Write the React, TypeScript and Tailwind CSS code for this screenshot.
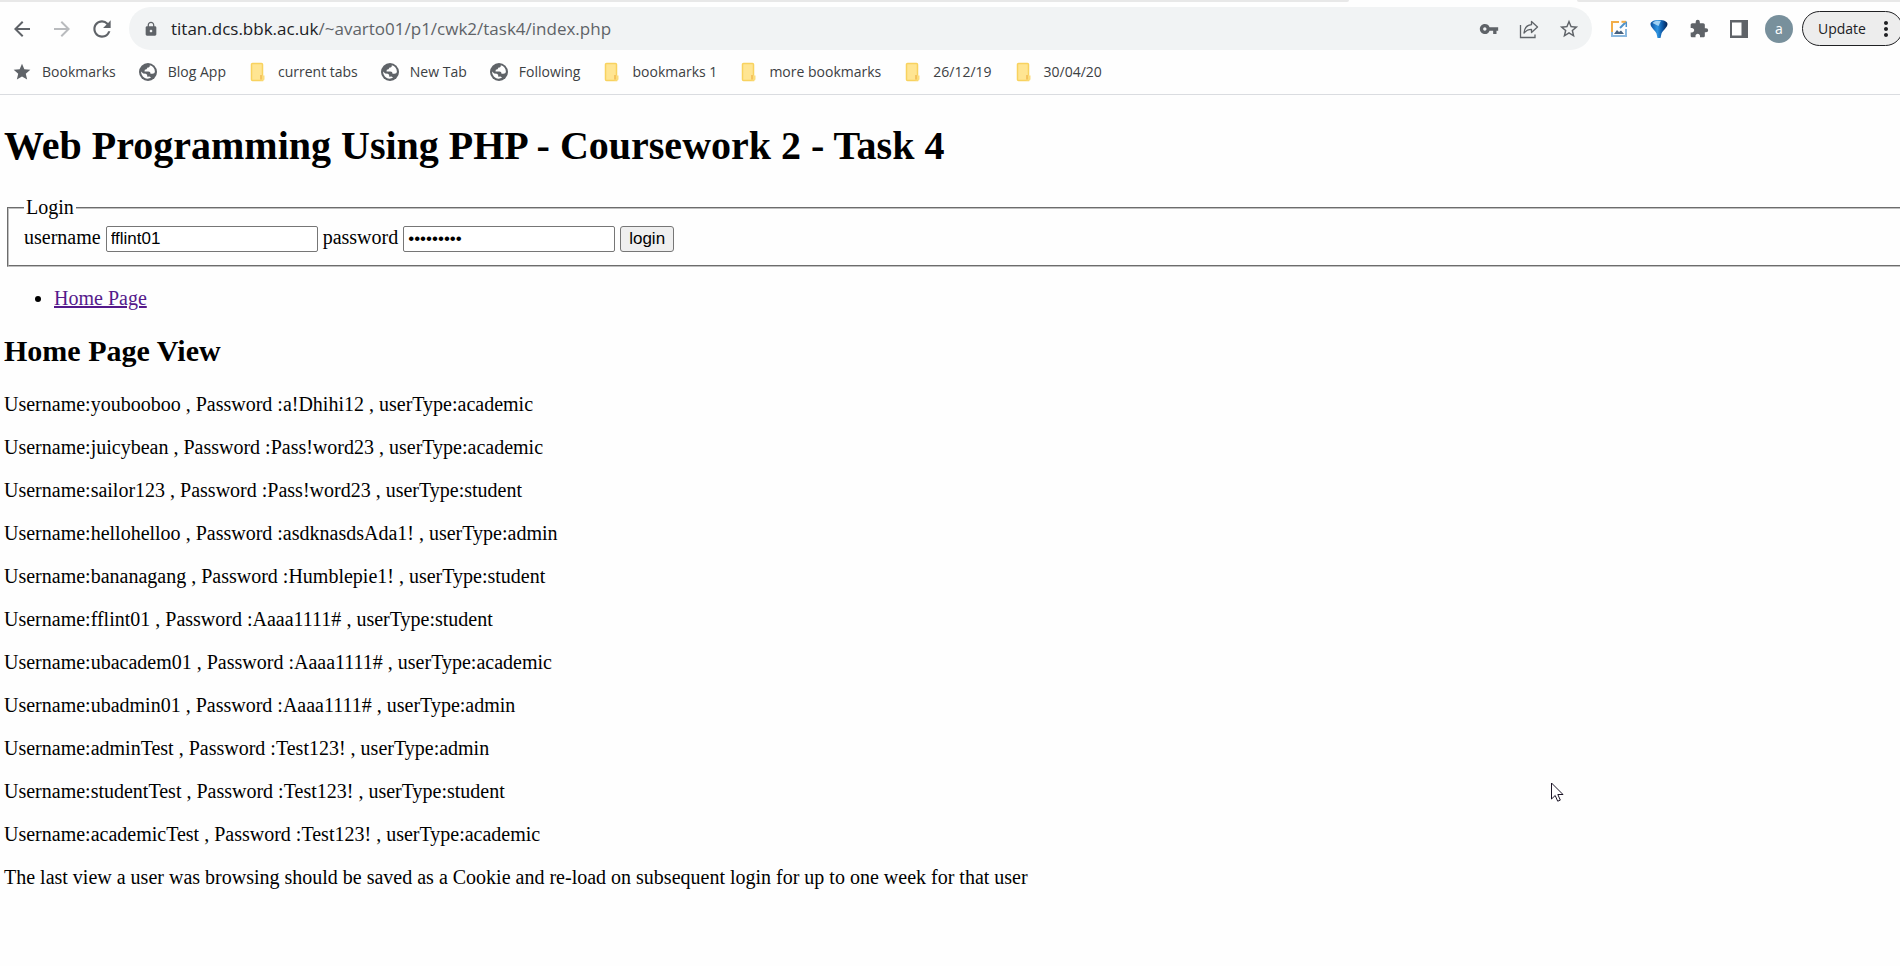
import type { ReactNode } from "react";
import {
  MdArrowBack,
  MdArrowForward,
  MdExtension,
  MdLock,
  MdMoreVert,
  MdRefresh,
  MdStar,
  MdStarBorder,
  MdVpnKey,
} from "react-icons/md";

const users = [
  { name: "youbooboo", password: "a!Dhihi12", type: "academic" },
  { name: "juicybean", password: "Pass!word23", type: "academic" },
  { name: "sailor123", password: "Pass!word23", type: "student" },
  { name: "hellohelloo", password: "asdknasdsAda1!", type: "admin" },
  { name: "bananagang", password: "Humblepie1!", type: "student" },
  { name: "fflint01", password: "Aaaa1111#", type: "student" },
  { name: "ubacadem01", password: "Aaaa1111#", type: "academic" },
  { name: "ubadmin01", password: "Aaaa1111#", type: "admin" },
  { name: "adminTest", password: "Test123!", type: "admin" },
  { name: "studentTest", password: "Test123!", type: "student" },
  { name: "academicTest", password: "Test123!", type: "academic" },
];

type BookmarkKind = "star" | "globe" | "folder";

const bookmarks: { label: string; kind: BookmarkKind }[] = [
  { label: "Bookmarks", kind: "star" },
  { label: "Blog App", kind: "globe" },
  { label: "current tabs", kind: "folder" },
  { label: "New Tab", kind: "globe" },
  { label: "Following", kind: "globe" },
  { label: "bookmarks 1", kind: "folder" },
  { label: "more bookmarks", kind: "folder" },
  { label: "26/12/19", kind: "folder" },
  { label: "30/04/20", kind: "folder" },
];

function FolderIcon() {
  return (
    <svg width="16" height="20" viewBox="0 0 16 20" aria-hidden="true">
      <path d="M1.500 2.500a1 1 0 0 1 1-1h9a1 1 0 0 1 1 1v16h-10a1 1 0 0 1-1-1z" fill="#ffe592" stroke="#f8d25f" strokeWidth="1.500" />
      <path d="M10.500 13.500h4v3.500a1.500 1.500 0 0 1-1.500 1.500h-2.500z" fill="#fbdc7c" />
      <path d="M11 13v4.500" stroke="#eda93c" />
    </svg>
  );
}

function GlobeIcon() {
  return (
    <svg width="18" height="18" viewBox="0 0 18 18" aria-hidden="true">
      <circle cx="9" cy="9" r="9" fill="#5f6368" />
      <path
        d="M10.800 2.200c.2 1.500-.6 2.300-2.200 2.400L7.500 6.300 5.800 6.800l-.3 1.700h3.800c1.500 0 2.200.8 2.200 2.200h1.800c1.600 0 2.500-1 2.600-2.300C15.800 5.300 13.800 2.900 10.800 2.200z"
        fill="#fefefe"
      />
      <path
        d="M2.100 8.600c0 3.800 2.600 6.800 6.300 7.200 1.400 0 2.600-.5 3.600-1.200l-1.500-1-2.200.2-.2-2-1.300-1-2.600-.2z"
        fill="#fefefe"
      />
    </svg>
  );
}

function ShareIcon() {
  return (
    <svg width="20" height="20" viewBox="0 0 20 20" fill="none" stroke="#5f6368" strokeWidth="1.300" aria-hidden="true">
      <path d="M1.500 6v12.500h14.500v-3" />
      <path d="M5 14c.5-5 3-8 7.500-8.300V2.500L18.500 8l-6 5.500v-3.200C9 10.300 7 11.500 5 14z" strokeLinejoin="round" />
    </svg>
  );
}

function ScreenshotIcon() {
  return (
    <svg width="18" height="18" viewBox="0 0 18 18" fill="none" aria-hidden="true">
      <path d="M9 2H2v13" stroke="#f2ad49" strokeWidth="2" />
      <path d="M2 12v4h14V9" stroke="#8ab8df" strokeWidth="2" />
      <path d="M4 14l3-4 2 2 2-1.500 3 3.500z" fill="#47627f" />
      <path d="M10 8l6-6" stroke="#4f92c9" strokeWidth="2" />
      <path d="M11.500 1.800H16" stroke="#f2ad49" strokeWidth="2" />
      <path d="M16.300 1.500V7" stroke="#4f92c9" strokeWidth="1.500" />
    </svg>
  );
}

function BalloonIcon() {
  return (
    <svg width="18" height="20" viewBox="0 0 18 20" aria-hidden="true">
      <defs>
        <linearGradient id="balloon" x1="0" y1="0" x2="1" y2="0">
          <stop offset="0" stopColor="#0b4f9e" />
          <stop offset="0.400" stopColor="#2f95e2" />
          <stop offset="0.700" stopColor="#0c58a6" />
          <stop offset="1" stopColor="#04204f" />
        </linearGradient>
      </defs>
      <path d="M.5 5C.8 2.500 4 1 9 1s8.200 1.500 8.500 4c0 3.500-4.500 6-6 9.500L10.500 19h-3L6.500 14.500C5 11 .5 8.500 .5 5z" fill="url(#balloon)" />
      <path d="M2.500 4C4 2 7 1.500 11 1.800L8.500 7z" fill="#bfe3fa" opacity=".8" />
    </svg>
  );
}

function SidePanelIcon() {
  return (
    <svg width="18" height="18" viewBox="0 0 18 18" aria-hidden="true">
      <path d="M0 0h18v18H0zM2 2.500v13h9.500v-13z" fill="#5f6368" fillRule="evenodd" />
    </svg>
  );
}

function BookmarkIcon({ kind }: { kind: BookmarkKind }) {
  if (kind === "star") return <MdStar className="size-5" />;
  if (kind === "globe") return <GlobeIcon />;
  return <FolderIcon />;
}

function ToolButton({ label, children }: { label: string; children: ReactNode }) {
  return (
    <button type="button" aria-label={label} className="flex w-10 justify-center">
      {children}
    </button>
  );
}

function BrowserBar() {
  return (
    <header className="border-b border-[#dadce0] font-['Open_Sans',sans-serif] text-[#5f6368]">
      <div className="flex h-[2px] justify-between">
        <div className="w-[71%] rounded-br-full bg-[#e8e8e8]" />
        <div className="w-[17%] rounded-bl-full bg-[#e8e8e8]" />
      </div>
      <div className="flex h-[53px] items-center overflow-hidden">
        <nav aria-label="History" className="flex w-[129px] shrink-0 items-center pl-[2px]">
          <ToolButton label="Back"><MdArrowBack className="size-6" /></ToolButton>
          <ToolButton label="Forward"><MdArrowForward className="size-6 text-[#b9bbbe]" /></ToolButton>
          <ToolButton label="Reload"><MdRefresh className="size-[26px]" /></ToolButton>
        </nav>
        <div className="flex h-[43px] grow items-center rounded-full bg-[#f1f3f4] pr-[3px] pl-[14px]">
          <MdLock className="size-4" />
          <p className="grow pl-3 text-[17px] whitespace-nowrap">
            <span className="text-[#202124]">titan.dcs.bbk.ac.uk</span>/~avarto01/p1/cwk2/task4/index.php
          </p>
          <ToolButton label="Passwords"><MdVpnKey className="size-5" /></ToolButton>
          <ToolButton label="Share"><ShareIcon /></ToolButton>
          <ToolButton label="Bookmark this page"><MdStarBorder className="size-[22px]" /></ToolButton>
        </div>
        <div className="flex shrink-0 items-center pl-[7px]">
          <ToolButton label="Screenshot"><ScreenshotIcon /></ToolButton>
          <ToolButton label="Balloon"><BalloonIcon /></ToolButton>
          <ToolButton label="Extensions"><MdExtension className="size-5" /></ToolButton>
          <ToolButton label="Side panel"><SidePanelIcon /></ToolButton>
          <ToolButton label="Profile">
            <span className="flex size-7 items-center justify-center rounded-full bg-[#78909c] text-sm font-medium text-white">
              a
            </span>
          </ToolButton>
        </div>
        <button
          type="button"
          className="mr-[-3px] ml-[3px] flex h-[35px] w-[101px] shrink-0 items-center justify-between rounded-full border border-[#202124] bg-[#ededed] pr-1 pl-[15px] text-sm text-[#202124]"
        >
          Update
          <MdMoreVert className="size-6" />
        </button>
      </div>
      <nav aria-label="Bookmarks" className="flex h-[39px] items-center gap-[22px] pb-[6px] pl-3 text-sm text-[#3c4043]">
        {bookmarks.map((b) => (
          <a key={b.label} href="#" className="flex items-center gap-[10px]">
            <span className="flex w-5 justify-center text-[#5f6368]"><BookmarkIcon kind={b.kind} /></span>
            {b.label}
          </a>
        ))}
      </nav>
    </header>
  );
}

function LoginForm() {
  const field =
    "h-[26px] w-[212px] rounded-[2px] border border-[#767676] bg-white px-1 font-['Liberation_Sans',sans-serif] text-[17px] leading-5";
  return (
    <form onSubmit={(e) => e.preventDefault()}>
      <fieldset className="mr-[-8px] ml-[3px] border-2 border-[#c0c0c0] px-[15px] pt-[7px] pb-[13px] [border-style:groove]">
        <legend className="px-[2px]">Login</legend>
        <div className="flex items-baseline gap-[5px]">
          <label htmlFor="username">username</label>
          <input id="username" type="text" defaultValue="fflint01" className={field} />
          <label htmlFor="password">password</label>
          <input id="password" type="password" defaultValue="Aaaa1111#" className={field} />
          <button
            type="submit"
            className="h-[26px] rounded-[3px] border border-[#767676] bg-[#efefef] px-2 font-['Liberation_Sans',sans-serif] text-[17px] leading-5"
          >
            login
          </button>
        </div>
      </fieldset>
    </form>
  );
}

export default function App() {
  return (
    <div className="relative min-h-screen overflow-hidden bg-[#fefefe]">
      <BrowserBar />
      <main className="px-1 font-['Liberation_Serif',serif] text-[20px] leading-[23px] text-black">
        <h1 className="mt-7 mb-[27px] text-[40px] leading-[46px] font-bold">
          Web Programming Using PHP - Coursework 2 - Task 4
        </h1>
        <LoginForm />
        <ul className="mt-5 list-disc pl-[50px]">
          <li>
            <a href="#" className="text-[#551a8b] underline">Home Page</a>
          </li>
        </ul>
        <h2 className="mt-6 mb-[25px] text-[30px] leading-[34px] font-bold">Home Page View</h2>
        {users.map((u) => (
          <p key={u.name} className="mb-5">
            Username:{u.name} , Password :{u.password} , userType:{u.type}
          </p>
        ))}
        <p>
          The last view a user was browsing should be saved as a Cookie and re-load on subsequent login for up to one
          week for that user
        </p>
      </main>
      <svg className="absolute top-[782px] left-[1551px]" width="14" height="22" viewBox="0 0 14 22" aria-hidden="true">
        <path d="M.5 1v16l3.700-3.500 2.500 5.700 2.600-1.100-2.500-5.600H12z" fill="#fff" stroke="#1b1426" />
      </svg>
    </div>
  );
}
